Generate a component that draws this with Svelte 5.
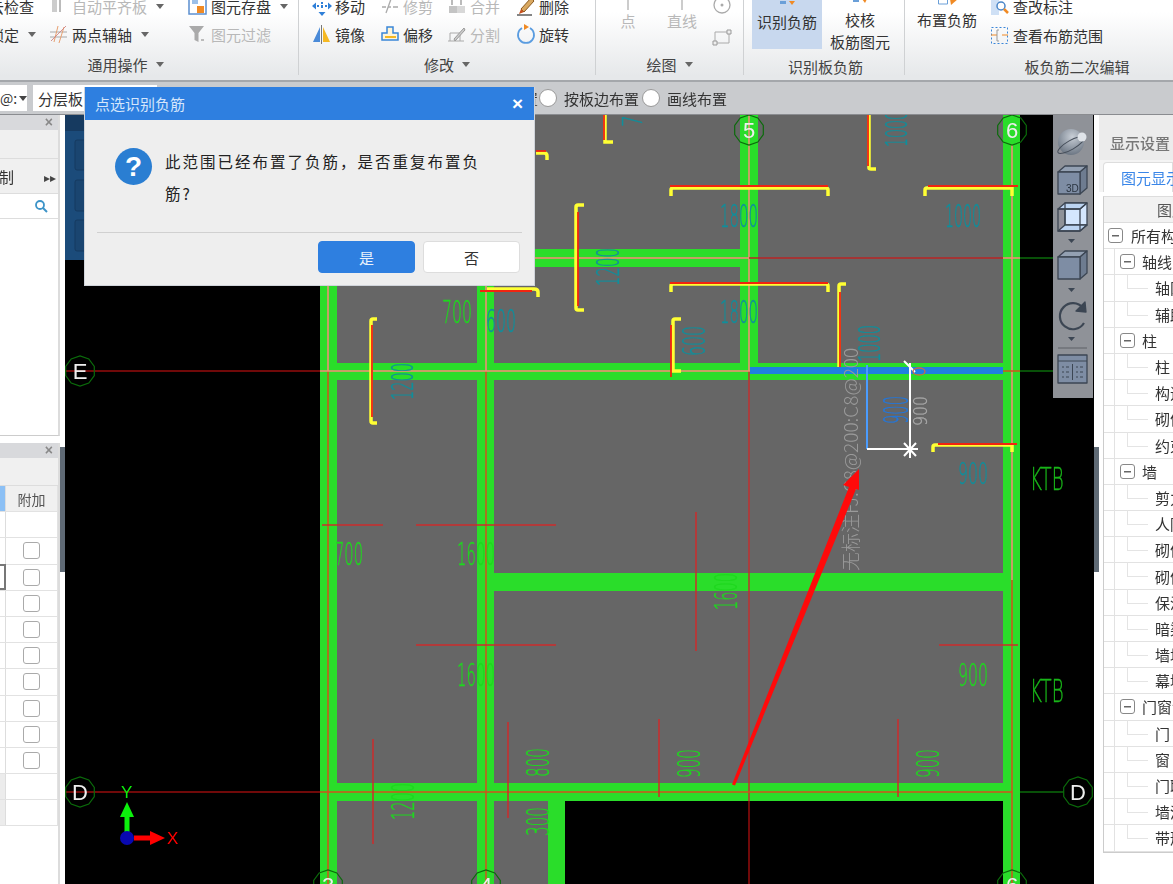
<script lang="ts">
  const icons: Record<string, string> = {
    align: `<rect x="3" y="1" width="5" height="15" fill="#ccc"/><rect x="10" y="1" width="2" height="15" fill="#bbb"/>`,
    save: `<rect x="1" y="2" width="17" height="16" fill="#fff" stroke="#5b8fd0" stroke-width="1.5"/><rect x="4" y="4" width="6" height="4" fill="#9cc0ea"/><rect x="9" y="10" width="7" height="7" fill="#f08a24"/>`,
    move: `<g stroke="#2f7fd8" stroke-width="2" fill="#2f7fd8"><path d="M10 6v8M5 10h10" stroke-dasharray="2 2"/><path d="M10 0l3.500 4h-7zM10 20l3.500-4h-7zM0 10l4-3.500v7zM20 10l-4-3.500v7z" stroke="none"/></g>`,
    trim: `<path d="M2 11h4M8 11h3M13 11h5" stroke="#aaa" stroke-width="1.300"/><path d="M6 17l5-14" stroke="#aaa" stroke-width="1.300"/>`,
    merge: `<rect x="2" y="10" width="8" height="7" fill="#c4c4c4"/><rect x="10" y="10" width="8" height="7" fill="#d8d8d8"/><path d="M5 4v5M14 4v5" stroke="#bbb" stroke-width="2"/>`,
    erase: `<path d="M5 13L15 2l3 3L8 16z" fill="#d9a860" stroke="#8a5a20"/><path d="M3 18l2-5 3 3z" fill="#c8501c"/><path d="M1 19h15" stroke="#333" stroke-width="1.200"/>`,
    axis: `<path d="M1 8h17M1 13h17" stroke="#a8a8a8"/><path d="M5 18L9 2M10 19L15 3" stroke="#e8a070"/><path d="M2 17L17 2" stroke="#c77" stroke-width=".8"/>`,
    filter: `<path d="M1 2h15l-5.500 7v9l-4-2V9z" fill="#aaa"/><rect x="13" y="15" width="3" height="2" fill="#bbb"/>`,
    mirror: `<path d="M8 3v15H1z" fill="#4a8ad8"/><path d="M11 3v15h7z" fill="#f5b822"/><path d="M9.500 1v19" stroke="#777"/>`,
    offset: `<path d="M7 3h6v6h5v7H2V9h5z" fill="#fff5d8" stroke="#3a86d8" stroke-width="1.500"/><path d="M5 13h11" stroke="#f5b822" stroke-width="2"/>`,
    split: `<path d="M1 17h16M3 9h10M3 9v8M13 9v8" stroke="#aaa" fill="none"/><path d="M7 15L17 4l1 2L8 17z" fill="#ccc" stroke="#999"/>`,
    rotate: `<path d="M6 4a8 8 0 1 0 8 0" fill="none" stroke="#5a9ce0" stroke-width="1.800"/><path d="M8 0l5 3-5 3z" fill="#f08a24"/>`,
    find: `<rect x="1" y="1" width="8" height="17" fill="#cfe0f5"/><circle cx="11" cy="9" r="4" fill="#fff" stroke="#4a86c8" stroke-width="1.500"/><path d="M14 12l4 4" stroke="#f08a24" stroke-width="2.500"/>`,
    range: `<rect x="1.500" y="1.500" width="16" height="16" fill="none" stroke="#3a86d8" stroke-dasharray="2 2"/><path d="M1 9h6M12 9h6" stroke="#f08a24"/><path d="M9 4H7v11h2" fill="none" stroke="#999"/>`,
  };

  const tools1 = [
    [['云检查', '', false], ['锁定', '', true]],
    [['自动平齐板', 'align', true, true], ['两点辅轴', 'axis', true]],
    [['图元存盘', 'save', true], ['图元过滤', 'filter', false, true]],
  ] as [string, string, boolean, boolean?][][];

  const tools2 = [
    ['移动', 'move'], ['修剪', 'trim', true], ['合并', 'merge', true], ['删除', 'erase'],
    ['镜像', 'mirror'], ['偏移', 'offset'], ['分割', 'split', true], ['旋转', 'rotate'],
  ] as [string, string, boolean?][];

  const checkRows = Array.from({ length: 9 });

  const tree: [string, number, boolean?][] = [
    ['所有构件', 0, true], ['轴线', 1, true], ['轴网', 2], ['辅助轴线', 2],
    ['柱', 1, true], ['柱', 2], ['构造柱', 2], ['砌体柱', 2], ['约束边缘', 2],
    ['墙', 1, true], ['剪力墙', 2], ['人防门框墙', 2], ['砌体墙', 2], ['砌体加筋', 2],
    ['保温墙', 2], ['暗梁', 2], ['墙垛', 2], ['幕墙', 2],
    ['门窗洞', 1, true], ['门', 2], ['窗', 2], ['门联窗', 2], ['墙洞', 2], ['带形窗', 2],
  ];

  // canvas uses page coordinates through its viewBox
  const walls = [
    [320, 115, 17, 769], [477, 115, 17, 769], [740, 115, 18, 265], [1003, 115, 17, 769],
    [320, 249, 438, 18], [320, 363, 700, 17], [494, 573, 509, 18], [320, 783, 700, 18], [548, 801, 17, 83],
  ];

  const PINK = '#f88a7a';
  const ORG = '#d2521c';
  const DKR = '#960c0c';
  const DKG = '#0b6b0b';
  const RED = '#cc2c2c';
  const lines: [number, number, number, number, string][] = [
    [328, 115, 328, 371, PINK], [328, 371, 328, 884, ORG],
    [486, 115, 486, 371, PINK], [486, 371, 486, 884, ORG],
    [749, 115, 749, 371, PINK], [749, 371, 749, 801, '#c03030'], [749, 801, 749, 884, DKR],
    [1012, 145, 1012, 580, PINK], [1012, 580, 1012, 884, ORG],
    [320, 258, 749, 258, PINK], [749, 258, 1003, 258, '#b82626'], [1003, 258, 1020, 258, PINK], [1020, 258, 1053, 258, DKG],
    [65, 371, 320, 371, DKR], [320, 371, 750, 371, PINK], [1003, 371, 1020, 371, ORG], [1020, 371, 1053, 371, DKG],
    [65, 792, 320, 792, DKR], [320, 792, 1012, 792, ORG], [1020, 792, 1064, 792, DKG],
    [322, 525, 383, 525, RED], [416, 525, 556, 525, RED], [416, 645, 556, 645, RED], [939, 645, 1018, 645, RED],
    [696, 512, 696, 651, RED], [898, 719, 898, 797, RED], [659, 719, 659, 797, RED], [508, 722, 508, 818, RED], [373, 739, 373, 844, RED],
  ];

  const hooks: string[] = [
    'M605 115V142H613', 'M536 153H544Q547 153 547 156V160',
    'M671 196V190Q671 188 673 188H826Q828 188 828 190V196',
    'M869 115V168Q869 169 871 169H876',
    'M925 196V190Q925 188 927 188H1012V196',
    'M584 205H578Q576 205 576 207V308Q576 310 578 310H584',
    'M671 292V286Q671 284 673 284H826Q828 284 828 286V292',
    'M846 284H841Q839 284 839 286V367',
    'M377 319H373Q371 319 371 321V421Q371 423 373 423H377',
    'M487 289H534Q538 289 538 292V297',
    'M681 319H675Q673 319 673 321V371H681',
    'M933 452V447Q933 445 935 445H1012V452',
  ];
  const rebars: string[] = [
    'M604 115V140', 'M536 151H546', 'M670 186H828', 'M868 115V166', 'M928 186H1018', 'M578 212V306',
    'M670 283H828', 'M840 292V367', 'M372 325V417', 'M480 291H532', 'M671 325V377', 'M938 444H1017',
  ];

  const TEAL = '#0f8f9c';
  const GRN = '#1fd81f';
  // text, x0, y0, x1, y1, colour, vertical
  const labels: [string, number, number, number, number, string, boolean?][] = [
    ['7', 622, 115, 642, 127, TEAL, true],
    ['1000', 885, 111, 907, 147, TEAL, true],
    ['1800', 720, 204, 758, 227, TEAL],
    ['1000', 945, 204, 981, 227, TEAL],
    ['1200', 596, 248, 619, 286, TEAL, true],
    ['1800', 720, 300, 758, 323, TEAL],
    ['600', 682, 326, 705, 356, TEAL, true],
    ['1000', 858, 325, 880, 362, TEAL, true],
    ['1200', 391, 363, 413, 400, TEAL, true],
    ['600', 486, 309, 516, 332, TEAL],
    ['900', 958, 462, 988, 484, TEAL],
    ['700', 442, 300, 472, 323, GRN],
    ['700', 335, 542, 363, 565, GRN],
    ['1600', 457, 542, 495, 565, GRN],
    ['1600', 457, 663, 495, 686, GRN],
    ['1600', 714, 573, 737, 610, GRN, true],
    ['900', 958, 663, 988, 686, GRN],
    ['900', 916, 749, 939, 778, GRN, true],
    ['900', 677, 749, 700, 778, GRN, true],
    ['800', 526, 748, 549, 777, GRN, true],
    ['300', 526, 807, 549, 836, GRN, true],
    ['1200', 391, 783, 414, 820, GRN, true],
    ['KTB', 1030, 467, 1065, 490, '#19b619'],
    ['KTB', 1030, 679, 1065, 702, '#19b619'],
    ['900', 913, 396, 927, 426, '#a8a8a8', true],
    ['900', 884, 396, 908, 424, '#2377dc', true],
  ];

  // squeeze a label into its box: the plan's digits are tall and narrow
  function fit([t, x0, y0, x1, y1, , vert]: (typeof labels)[number]) {
    const h = vert ? x1 - x0 : y1 - y0;
    const w = vert ? y1 - y0 : x1 - x0;
    const size = h / 0.729;
    const em = t === 'KTB' ? 1.92 : t.length * 0.636;
    const sx = (w / (em * size)).toFixed(3);
    const place = vert ? `translate(${x1} ${y1}) rotate(-90)` : `translate(${x0} ${y1})`;
    return { size, transform: `${place} scale(${sx} 1)` };
  }

  const bubbles: [string, number, number][] = [
    ['5', 749, 130], ['6', 1012, 130], ['E', 80, 371], ['D', 80, 792], ['D', 1078, 792],
    ['3', 328, 885], ['4', 486, 885], ['6', 1012, 885],
  ];

  function octagon(cx: number, cy: number, r = 15) {
    return Array.from({ length: 10 }, (_, i) => {
      const a = (i / 10) * Math.PI * 2 + Math.PI / 10;
      return `${(cx + r * Math.cos(a)).toFixed(1)},${(cy + r * Math.sin(a)).toFixed(1)}`;
    }).join(' ');
  }

  const NOTE = '无标注FJ:C8@200:C8@200';
</script>

<div class="screen">
  <header class="ribbon">
    <section class="group g1">
      <div class="rows tools1">
        {#each tools1 as col, i}
          <div class="col col{i}">
            {#each col as [text, icon, caret, off]}
              <div class="tool" class:off>
                {#if icon}<svg class="ico" viewBox="0 0 20 20">{@html icons[icon]}</svg>{/if}
                <span>{text}</span>
                {#if caret}<i class="caret"></i>{/if}
              </div>
            {/each}
          </div>
        {/each}
      </div>
      <div class="label">通用操作<i class="caret"></i></div>
    </section>

    <section class="group g2">
      <div class="rows tools2">
        {#each tools2 as [text, icon, off]}
          <div class="tool" class:off>
            <svg class="ico" viewBox="0 0 20 20">{@html icons[icon]}</svg>
            <span>{text}</span>
          </div>
        {/each}
      </div>
      <div class="label">修改<i class="caret"></i></div>
    </section>

    <section class="group g3">
      <div class="draw">
        <div class="big off"><i class="stub"></i><span>点</span></div>
        <div class="big off"><i class="stub"></i><span>直线</span></div>
        <div class="shapes">
          <svg width="20" height="20" viewBox="0 0 20 20"><circle cx="10" cy="6" r="8" fill="none" stroke="#aaa" stroke-width="1.300"/><circle cx="10" cy="6" r="1.500" fill="#aaa"/></svg>
          <svg width="20" height="20" viewBox="0 0 20 20"><path d="M3 5h14v11H3z" fill="none" stroke="#aaa"/><path d="M1 14h4v4H1zM15 3h4v4h-4z" fill="#eee" stroke="#999"/></svg>
        </div>
      </div>
      <div class="label">绘图<i class="caret"></i></div>
    </section>

    <section class="group g4">
      <div class="draw recog">
        <div class="big active">
          <svg class="top" width="20" height="10" viewBox="0 0 20 10"><path d="M3 0h6v3H3z" fill="#6a9fd8"/><path d="M12 0h6l-3 4z" fill="#f08a24"/></svg>
          <span>识别负筋</span>
        </div>
        <div class="big check">
          <svg class="top" width="20" height="10" viewBox="0 0 20 10"><path d="M3 0h6v3H3z" fill="#6a9fd8"/><path d="M12 0h5l-2 4z" fill="#f08a24"/></svg>
          <span>校核</span>
          <span>板筋图元</span>
        </div>
      </div>
      <div class="label low">识别板负筋</div>
    </section>

    <section class="group last">
      <div class="draw second">
        <div class="big">
          <svg class="top" width="24" height="10" viewBox="0 0 24 10"><path d="M3.500 0v5h9V0" fill="#fff" stroke="#6a9fd8"/><path d="M15 0h8l-7 6z" fill="#f08a24"/></svg>
          <span>布置负筋</span>
        </div>
        <div class="pair">
          <div class="tool"><svg class="ico" viewBox="0 0 20 20">{@html icons.find}</svg><span>查改标注</span></div>
          <div class="tool"><svg class="ico" viewBox="0 0 20 20">{@html icons.range}</svg><span>查看布筋范围</span></div>
        </div>
      </div>
      <div class="label low">板负筋二次编辑</div>
    </section>
  </header>

  <div class="optbar">
    <div class="combo first"><span>@:</span><i class="caret dark"></i></div>
    <div class="combo second-combo">分层板</div>
    <span class="hidden-part">置</span>
    <i class="radio"></i>
    <span class="opt">按板边布置</span>
    <i class="radio"></i>
    <span class="opt">画线布置</span>
  </div>

  <main class="work">
    <aside class="left">
      <div class="panel top-panel">
        <div class="ptitle"><b>×</b></div>
        <div class="pblank"></div>
        <div class="prow"><span>制</span><small>▸▸</small></div>
        <div class="psearch">
          <svg width="14" height="14" viewBox="0 0 14 14"><circle cx="6" cy="6" r="4" fill="none" stroke="#3d94c8" stroke-width="1.800"/><path d="M9 9l4 4" stroke="#3d94c8" stroke-width="2"/></svg>
        </div>
      </div>
      <div class="panel grid-panel">
        <div class="ptitle"><b>×</b></div>
        <div class="pblank tall"></div>
        <div class="grow head"><i class="cut blue"></i><span>附加</span></div>
        <div class="grow"><i class="cut"></i><span></span></div>
        {#each checkRows as _, i}
          <div class="grow">
            <i class="cut" class:sel={i === 1}></i>
            <span><i class="check-box"></i></span>
          </div>
        {/each}
        <div class="grow"><i class="cut gray"></i><span></span></div>
        <div class="grow"><i class="cut gray"></i><span></span></div>
      </div>
    </aside>
    <div class="splitter"><i></i></div>

    <div class="canvas">
      <svg class="plan" width="1029" height="769" viewBox="65 115 1029 769">
        <defs>
          <clipPath id="onwall"><rect x="835" y="363" width="30" height="17" /></clipPath>
        </defs>
        <rect x="65" y="115" width="1029" height="769" fill="#000" />
        <rect x="320" y="115" width="683" height="668" fill="#666" />
        <rect x="337" y="801" width="228" height="83" fill="#666" />

        <rect x="65" y="115" width="255" height="145" fill="#1b4b7a" />
        <rect x="65" y="115" width="255" height="16" fill="#163a60" />
        <rect x="75" y="140" width="40" height="30" rx="2" fill="#1a4570" stroke="#153a60" />
        <rect x="75" y="180" width="40" height="31" rx="2" fill="#1a4570" stroke="#153a60" />
        <rect x="75" y="220" width="40" height="31" rx="2" fill="#1a4570" stroke="#153a60" />

        {#each walls as [x, y, w, h]}
          <rect {x} {y} width={w} height={h} fill="#2add2a" />
        {/each}
        {#each lines as [x1, y1, x2, y2, c]}
          <line {x1} {y1} {x2} {y2} stroke={c} stroke-width="1.500" />
        {/each}

        {#each hooks as d}
          <path {d} fill="none" stroke="#ffff33" stroke-width="3.500" />
        {/each}
        {#each rebars as d}
          <path {d} fill="none" stroke="#f02410" stroke-width="1.800" />
        {/each}

        <rect x="750" y="367" width="253" height="7" fill="#1f80e0" />

        {#each labels as label}
          {@const f = fit(label)}
          <text class="num" transform={f.transform} fill={label[5]} stroke={label[5]} font-size={f.size}>{label[0]}</text>
        {/each}

        <text class="note" transform="translate(858 571) rotate(-90)">{NOTE}</text>
        <text class="note magenta" transform="translate(858 571) rotate(-90)" clip-path="url(#onwall)">{NOTE}</text>

        <path d="M867 365V449" stroke="#4a9cff" stroke-width="2" />
        <path d="M867 449H918M910 363V458" stroke="#fff" stroke-width="2" fill="none" />
        <path d="M904 443L916 456M904 456L916 443M904 361L915 372" stroke="#fff" stroke-width="2" />
        <ellipse cx="919" cy="371.500" rx="6" ry="3.500" fill="none" stroke="#c86a4a" stroke-width="1.300" />

        <polygon points="732,784.500 735,785.500 856,489 859,490 859,469 843,485 849,487" fill="#ff0a0a" />

        {#each bubbles as [t, x, y]}
          <polygon points={octagon(x, y)} fill="none" stroke={DKG} stroke-width="1.200" />
          <text class="bubble" x={x} y={y + 8}>{t}</text>
        {/each}

        <rect x="124.500" y="815" width="5" height="20" fill="#0cf00c" />
        <polygon points="127,802 134,817 120,817" fill="#0cf00c" />
        <rect x="134" y="835.500" width="18" height="5" fill="#f00" />
        <polygon points="165,838 150,831 150,845" fill="#f00" />
        <circle cx="127" cy="838" r="7" fill="#0808b0" />
        <text class="axis y" x="121" y="798">Y</text>
        <text class="axis x" x="167" y="844">X</text>
      </svg>

      <svg class="strip" width="40" height="283" viewBox="1053 115 40 283">
        <defs>
          <radialGradient id="ball" cx="0.55" cy="0.3" r="0.8">
            <stop offset="0" stop-color="#c8ced6" />
            <stop offset="1" stop-color="#5f6a78" />
          </radialGradient>
        </defs>
        <rect x="1053" y="115" width="40" height="283" fill="#8f9298" />
        <circle cx="1071" cy="142" r="13" fill="url(#ball)" />
        <ellipse cx="1071" cy="145" rx="15" ry="4.500" fill="none" stroke="#454d59" transform="rotate(-30 1071 145)" />
        <circle cx="1082" cy="137" r="4.500" fill="#dfe3e8" />

        <g stroke="#3c4653" stroke-width="1.300" stroke-linejoin="round">
          <path d="M1058 172l7-6h22l-7 6z" fill="#93a0b2" />
          <path d="M1080 172l7-6v22l-7 6z" fill="#6e7c90" />
          <path d="M1058 172h22v22h-22z" fill="#7e8da4" />

          <path d="M1065 203h22v22h-22z" fill="#d4e6fd" />
          <path d="M1058 209l7-6h22l-7 6zM1058 231l7-6h22l-7 6z" fill="#bcd4f2" />
          <path d="M1058 209h22v22h-22zM1065 203v22M1087 203l-7 6M1087 225l-7 6" fill="none" />

          <path d="M1058 257l7-6h22l-7 6z" fill="#93a0b2" />
          <path d="M1080 257l7-6v22l-7 6z" fill="#6e7c90" />
          <path d="M1058 257h22v22h-22z" fill="#7e8da4" />

          <path d="M1083 308a13 13 0 1 0 1 15" fill="none" stroke-width="2.200" />
          <path d="M1076 311l10 1-1-10z" fill="#3c4653" />

          <path d="M1058 355h29v28h-29z" fill="#7e8da4" />
          <path d="M1058 361h29M1072.500 364v16M1062 367h2M1062 372h2M1062 377h2M1066 367h3M1066 372h3M1066 377h3M1076 367h2M1076 372h2M1076 377h2M1080 367h3M1080 372h3M1080 377h3" fill="none" stroke-width="1" />
        </g>
        <text class="d3" x="1066" y="192">3D</text>
        <path d="M1068 239h7l-3.500 4zM1068 288h7l-3.500 4zM1068 337h7l-3.500 4z" fill="#3c4653" />
        <path d="M1058 348h29" stroke="#6a6d72" stroke-width="1.300" />
      </svg>
    </div>

    <div class="splitter"><i></i></div>

    <aside class="right">
      <div class="rhead">显示设置</div>
      <div class="tabs"><div class="tab">图元显示</div></div>
      <div class="tree">
        <div class="thead">图层设置</div>
        {#each tree as [name, lv, open]}
          <div class="node lv{lv}">
            {#if open}<i class="minus"></i>{/if}
            <span>{name}</span>
          </div>
        {/each}
      </div>
    </aside>
  </main>

  <div class="dialog">
    <div class="dtitle"><span>点选识别负筋</span><b>×</b></div>
    <div class="dmsg">
      <span class="q">?</span>
      <p>此范围已经布置了负筋，是否重复布置负筋?</p>
    </div>
    <div class="dfoot">
      <button class="yes">是</button>
      <button>否</button>
    </div>
  </div>
</div>

<style>
  :global(body) {
    margin: 0;
    background: #fff;
  }
  .screen {
    position: relative;
    width: 1173px;
    height: 884px;
    overflow: hidden;
    font-family: "Noto Sans CJK SC", "Liberation Sans", sans-serif;
    font-size: 15px;
    color: #333;
    filter: blur(0.3px);
  }

  /* ribbon */
  .ribbon {
    display: flex;
    height: 80px;
    overflow: hidden;
    background: linear-gradient(#fff 15%, #e6e8ea 95%);
    border-bottom: 2px solid #a4a7ab;
  }
  .group {
    display: flex;
    flex-direction: column;
    justify-content: space-between;
    height: 75px;
    border-right: 1px solid #cfd1d3;
    box-sizing: border-box;
  }
  .g1 { width: 299px; }
  .g2 { width: 297px; }
  .g3 { width: 148px; }
  .g4 { width: 161px; }
  .group.last {
    flex: 1;
    border-right: none;
  }
  .label {
    display: flex;
    align-items: center;
    justify-content: center;
    gap: 8px;
    height: 22px;
    color: #444;
    white-space: nowrap;
  }
  .g1 .label { padding-right: 47px; }
  .g4 .label { padding-left: 3px; }
  .last .label { padding-left: 76px; }
  .label.low {
    position: relative;
    top: 2px;
  }
  .caret {
    display: inline-block;
    width: 0;
    height: 0;
    border: 4px solid transparent;
    border-top: 5px solid #666;
    border-bottom: 0;
  }
  .caret.dark { border-top-color: #444; }
  .rows {
    margin-top: -8px;
  }
  .tools1 {
    display: flex;
    margin-left: -11px;
  }
  .col { display: flex; flex-direction: column; }
  .col0 { width: 60px; }
  .col1 { width: 139px; }
  .tools2 {
    display: grid;
    grid-template-columns: 68px 67px 69px auto;
    padding-left: 13px;
  }
  .tool {
    display: flex;
    align-items: center;
    height: 28px;
    gap: 3px;
    white-space: nowrap;
  }
  .tool .caret { margin-left: 6px; }
  .off { color: #b8b8b8; }
  .ico {
    width: 20px;
    height: 20px;
    flex: none;
  }
  .draw {
    display: flex;
    height: 49px;
  }
  .big {
    display: flex;
    flex-direction: column;
    align-items: center;
    line-height: 22px;
    white-space: nowrap;
  }
  .big .top { height: 10px; flex: none; }
  .stub {
    width: 2px;
    height: 10px;
    background: #ccc;
  }
  .draw .big.off:nth-child(1) { width: 30px; margin-left: 17px; }
  .draw .big.off:nth-child(2) { width: 30px; margin-left: 24px; }
  .shapes {
    display: flex;
    flex-direction: column;
    gap: 8px;
    margin: -1px 0 0 15px;
  }
  .recog { padding-left: 8px; margin-top: -1px; }
  .active {
    width: 70px;
    padding-top: 1px;
    margin-top: 1px;
    height: 48px;
    background: #c8d8ee;
  }
  .check { width: 76px; }
  .second { padding-left: 12px; margin-top: -1px; }
  .second .big { width: 60px; }
  .pair { margin: -7px 0 0 13px; }
  .pair .tool { height: 29px; }

  /* option bar */
  .optbar {
    display: flex;
    align-items: center;
    height: 32px;
    background: #c9cbce;
    border-bottom: 1px solid #8a8c90;
    white-space: nowrap;
  }
  .combo {
    display: flex;
    align-items: center;
    height: 26px;
    background: #fff;
    overflow: hidden;
  }
  .combo.first {
    width: 27px;
    margin-right: 6px;
    gap: 2px;
    font-size: 14px;
  }
  .combo.second-combo {
    width: 119px;
    padding-left: 5px;
  }
  .hidden-part { margin-left: 366px; }
  .radio {
    width: 16px;
    height: 16px;
    margin-left: 1px;
    background: #fff;
    border: 1px solid #999;
    border-radius: 50%;
  }
  .opt {
    width: 75px;
    margin: 0 2px 0 7px;
  }

  /* work area */
  .work {
    display: flex;
    height: 769px;
  }
  .left {
    width: 60px;
    flex: none;
  }
  .splitter {
    flex: none;
    width: 5px;
    padding-top: 332px;
    background: #fff;
  }
  .splitter i {
    display: block;
    height: 125px;
    background: #5f6a75;
  }
  .panel {
    box-sizing: border-box;
    border-right: 2px solid #dcdcdc;
    overflow: hidden;
  }
  .top-panel {
    height: 321px;
    border-bottom: 1px solid #ccc;
    margin-bottom: 7px;
  }
  .grid-panel { height: 441px; }
  .ptitle {
    height: 15px;
    padding-right: 5px;
    background: #d8d9dc;
    text-align: right;
    line-height: 14px;
    color: #888;
    font-family: "Liberation Sans", sans-serif;
    font-size: 14px;
  }
  .pblank {
    height: 28px;
    background: #f0f0f0;
    border-bottom: 1px solid #ddd;
  }
  .pblank.tall { height: 27px; }
  .prow {
    display: flex;
    align-items: center;
    justify-content: space-between;
    height: 34px;
    padding-right: 2px;
    background: #f0f0f0;
    border-bottom: 1px solid #ddd;
    overflow: hidden;
  }
  .prow span { margin-left: -1px; }
  .prow small { font-size: 12px; color: #444; }
  .psearch {
    display: flex;
    align-items: center;
    justify-content: flex-end;
    height: 24px;
    padding-right: 10px;
    border-bottom: 1px solid #ddd;
  }
  .grow {
    display: flex;
    height: 26.2px;
    box-sizing: border-box;
    border-bottom: 1px solid #e2e2e2;
  }
  .grow .cut {
    display: block;
    box-sizing: border-box;
    width: 6px;
    border-right: 1px solid #ddd;
  }
  .grow span {
    display: flex;
    align-items: center;
    justify-content: center;
    width: 51px;
    border-right: 1px solid #e2e2e2;
  }
  .cut.blue { background: #8cc0f5; }
  .cut.gray { background: #ececec; }
  .cut.sel {
    border: 2px solid #777;
    border-left: none;
    margin-top: -1px;
  }
  .head { background: #f0f0f0; color: #555; font-size: 14px; }
  .check-box {
    width: 15px;
    height: 15px;
    background: #fff;
    border: 1.500px solid #aaa;
    border-radius: 3px;
  }

  /* canvas */
  .canvas {
    position: relative;
    flex: none;
    width: 1029px;
    height: 769px;
    overflow: hidden;
  }
  .plan { display: block; }
  .strip {
    position: absolute;
    top: 0;
    right: 1px;
  }
  .num {
    font-family: "DejaVu Sans", sans-serif;
    font-weight: 200;
    stroke-width: 0.4px;
  }
  .note {
    font-family: "Noto Sans CJK SC", "Liberation Mono", monospace;
    font-size: 19px;
    font-weight: 300;
    fill: #9a9a9a;
  }
  .note.magenta { fill: #d050c0; }
  .bubble {
    font-family: "Liberation Sans", sans-serif;
    font-size: 22px;
    fill: #eee;
    text-anchor: middle;
  }
  .axis {
    font-family: "Liberation Sans", sans-serif;
    font-size: 17px;
  }
  .axis.y { fill: #0cf00c; }
  .axis.x { fill: #f00; }
  .d3 {
    font-family: "Liberation Sans", sans-serif;
    font-size: 10px;
    fill: #2a3440;
  }

  /* right panel */
  .right {
    flex: 1;
    min-width: 0;
    overflow: hidden;
    white-space: nowrap;
  }
  .rhead {
    height: 31px;
    padding: 12px 0 2px 11px;
    background: #ececec;
    color: #777;
    font-weight: 500;
    line-height: 32px;
  }
  .tabs {
    height: 30px;
    padding: 2px 0 0 4px;
    background: #f4f4f4;
  }
  .tab {
    height: 29px;
    padding-left: 17px;
    background: #fff;
    border: 1px solid #ddd;
    border-bottom: none;
    border-radius: 4px 0 0 0;
    color: #3a86e8;
    line-height: 29px;
  }
  .tree {
    margin: 4px 0 0 4px;
    border-left: 1px solid #ccc;
    border-top: 1px solid #ddd;
    border-bottom: 1px solid #ccc;
  }
  .thead {
    height: 25px;
    padding-left: 53px;
    background: #f2f2f2;
    border-bottom: 1px solid #ddd;
    line-height: 25px;
    color: #555;
  }
  .node {
    position: relative;
    display: flex;
    align-items: center;
    box-sizing: border-box;
    height: 26.2px;
    border-bottom: 1px solid #e2e2e2;
    color: #333;
  }
  .node.lv0 { padding-left: 4px; gap: 8px; }
  .node.lv1 { padding-left: 16px; gap: 7px; }
  .node.lv2 { padding-left: 51px; }
  .node.lv1::before, .node.lv2::before {
    content: "";
    position: absolute;
    left: 10px;
    top: 0;
    bottom: 0;
    border-left: 1px solid #e2e2e2;
  }
  .node.lv2::after {
    content: "";
    position: absolute;
    left: 23px;
    width: 20px;
    top: -1px;
    height: 14px;
    border-left: 1px solid #e4e4e4;
    border-bottom: 1px solid #e4e4e4;
  }
  .minus {
    position: relative;
    z-index: 1;
    flex: none;
    box-sizing: border-box;
    width: 15px;
    height: 15px;
    background: linear-gradient(#666, #666) center / 7px 1.500px no-repeat, #fff;
    border: 1px solid #888;
    border-radius: 3px;
  }

  /* dialog */
  .dialog {
    position: absolute;
    left: 84px;
    top: 87px;
    width: 451px;
    height: 199px;
    box-sizing: border-box;
    background: #eee;
    border: 1px solid #d0d4da;
    border-top: none;
  }
  .dtitle {
    display: flex;
    align-items: center;
    justify-content: space-between;
    height: 33px;
    padding: 0 11px 0 10px;
    background: #2e7fe0;
    color: #d5e6fb;
  }
  .dtitle b {
    color: #fff;
    font-family: "Liberation Sans", sans-serif;
    font-size: 19px;
    font-weight: 700;
    line-height: 1;
  }
  .dmsg {
    display: flex;
    align-items: flex-start;
    padding: 25px 0 0 30px;
    height: 87px;
  }
  .q {
    flex: none;
    width: 37px;
    height: 37px;
    margin-top: 3px;
    background: #2a7ed2;
    border-radius: 50%;
    color: #fff;
    font-family: "Liberation Sans", sans-serif;
    font-size: 28px;
    font-weight: 700;
    line-height: 37px;
    text-align: center;
  }
  .dmsg p {
    width: 332px;
    margin: 0 0 0 13px;
    font-size: 15.500px;
    letter-spacing: 2px;
    line-height: 32px;
    color: #222;
  }
  .dfoot {
    display: flex;
    justify-content: flex-end;
    gap: 8px;
    margin: 0 12px 0 12px;
    padding: 8px 2px 0 0;
    border-top: 1px solid #d0d0d0;
  }
  button {
    width: 97px;
    height: 32px;
    padding: 0;
    background: #fff;
    border: 1px solid #ddd;
    border-radius: 4px;
    font: inherit;
    color: #333;
  }
  button.yes {
    background: #2e7fe0;
    border-color: #2e7fe0;
    color: #e8f1fc;
  }
</style>
